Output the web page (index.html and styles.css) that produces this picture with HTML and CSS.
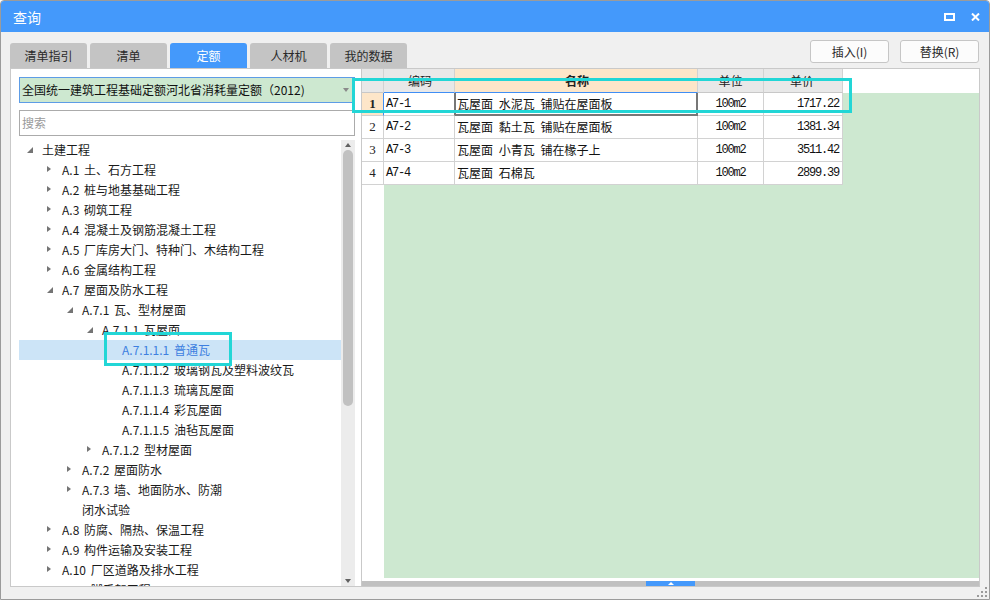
FILE: index.html
```html
<!DOCTYPE html>
<html lang="zh-CN">
<head>
<meta charset="utf-8">
<title>查询</title>
<link rel="stylesheet" href="styles.css">
</head>
<body>
<div class="window">
  <header class="titlebar">
    <span class="title">查询</span>
    <div class="win-controls">
      <svg class="icon" width="11" height="8" viewBox="0 0 11 8"><rect x="1" y="1" width="9" height="6" fill="none" stroke="#fff" stroke-width="2"/></svg>
      <svg class="icon" width="9" height="8" viewBox="0 0 9 8"><path d="M1 0.5L8 7.5M8 0.5L1 7.5" stroke="#fff" stroke-width="2"/></svg>
    </div>
  </header>

  <div class="toolbar">
    <nav class="tabs">
      <div class="tab">清单指引</div>
      <div class="tab">清单</div>
      <div class="tab active">定额</div>
      <div class="tab">人材机</div>
      <div class="tab">我的数据</div>
    </nav>
    <div class="actions">
      <button class="btn">插入(I)</button>
      <button class="btn">替换(R)</button>
    </div>
  </div>

  <div class="panes">
    <section class="left-pane">
      <div class="combo">
        <span class="combo-text">全国统一建筑工程基础定额河北省消耗量定额（2012)</span>
        <span class="combo-arrow"></span>
      </div>
      <div class="search">搜索</div>
      <div class="tree-area">
        <ul class="tree">
          <li class="node l0"><span class="caret e"></span><span class="label">土建工程</span></li>
          <li class="node l1"><span class="caret c"></span><span class="label">A.1 土、石方工程</span></li>
          <li class="node l1"><span class="caret c"></span><span class="label">A.2 桩与地基基础工程</span></li>
          <li class="node l1"><span class="caret c"></span><span class="label">A.3 砌筑工程</span></li>
          <li class="node l1"><span class="caret c"></span><span class="label">A.4 混凝土及钢筋混凝土工程</span></li>
          <li class="node l1"><span class="caret c"></span><span class="label">A.5 厂库房大门、特种门、木结构工程</span></li>
          <li class="node l1"><span class="caret c"></span><span class="label">A.6 金属结构工程</span></li>
          <li class="node l1"><span class="caret e"></span><span class="label">A.7 屋面及防水工程</span></li>
          <li class="node l2"><span class="caret e"></span><span class="label">A.7.1 瓦、型材屋面</span></li>
          <li class="node l3"><span class="caret e"></span><span class="label">A.7.1.1 瓦屋面</span></li>
          <li class="node l4 selected"><span class="caret"></span><span class="label">A.7.1.1.1 普通瓦</span></li>
          <li class="node l4"><span class="caret"></span><span class="label">A.7.1.1.2 玻璃钢瓦及塑料波纹瓦</span></li>
          <li class="node l4"><span class="caret"></span><span class="label">A.7.1.1.3 琉璃瓦屋面</span></li>
          <li class="node l4"><span class="caret"></span><span class="label">A.7.1.1.4 彩瓦屋面</span></li>
          <li class="node l4"><span class="caret"></span><span class="label">A.7.1.1.5 油毡瓦屋面</span></li>
          <li class="node l3"><span class="caret c"></span><span class="label">A.7.1.2 型材屋面</span></li>
          <li class="node l2"><span class="caret c"></span><span class="label">A.7.2 屋面防水</span></li>
          <li class="node l2"><span class="caret c"></span><span class="label wrap">A.7.3 墙、地面防水、防潮闭水试验</span></li>
          <li class="node l1"><span class="caret c"></span><span class="label">A.8 防腐、隔热、保温工程</span></li>
          <li class="node l1"><span class="caret c"></span><span class="label">A.9 构件运输及安装工程</span></li>
          <li class="node l1"><span class="caret c"></span><span class="label">A.10 厂区道路及排水工程</span></li>
          <li class="node l1"><span class="caret c"></span><span class="label">A.11 脚手架工程</span></li>
        </ul>
        <div class="vscroll">
          <div class="sc-btn"><span class="arr-up"></span></div>
          <div class="sc-thumb"></div>
          <div class="sc-fill"></div>
          <div class="sc-btn"><span class="arr-down"></span></div>
        </div>
      </div>
    </section>

    <section class="right-pane">
      <div class="grid-head">
        <div class="cell c-num"></div>
        <div class="cell c-code cur-top">编码</div>
        <div class="cell c-name sel cur-top">名称</div>
        <div class="cell c-unit">单位</div>
        <div class="cell c-price">单价</div>
      </div>
      <div class="grid-body">
        <div class="row current">
          <div class="cell c-num">1</div>
          <div class="cell c-code mono">A7-1</div>
          <div class="cell c-name">瓦屋面 水泥瓦 铺贴在屋面板</div>
          <div class="cell c-unit mono">100m2</div>
          <div class="cell c-price mono">1717.22</div>
        </div>
        <div class="row">
          <div class="cell c-num">2</div>
          <div class="cell c-code mono">A7-2</div>
          <div class="cell c-name">瓦屋面 黏土瓦 铺贴在屋面板</div>
          <div class="cell c-unit mono">100m2</div>
          <div class="cell c-price mono">1381.34</div>
        </div>
        <div class="row">
          <div class="cell c-num">3</div>
          <div class="cell c-code mono">A7-3</div>
          <div class="cell c-name">瓦屋面 小青瓦 铺在椽子上</div>
          <div class="cell c-unit mono">100m2</div>
          <div class="cell c-price mono">3511.42</div>
        </div>
        <div class="row">
          <div class="cell c-num">4</div>
          <div class="cell c-code mono">A7-4</div>
          <div class="cell c-name">瓦屋面 石棉瓦</div>
          <div class="cell c-unit mono">100m2</div>
          <div class="cell c-price mono">2899.39</div>
        </div>
      </div>
      <div class="hscroll"><div class="h-thumb"><span class="arr-up white"></span></div></div>
    </section>
  </div>

  <div class="hl hl-row"></div>
  <div class="hl hl-tree"></div>
  <svg class="grip" width="12" height="12" viewBox="0 0 12 12">
    <rect x="9" y="1" width="2" height="2" fill="#9a9a9a"/>
    <rect x="5" y="5" width="2" height="2" fill="#9a9a9a"/>
    <rect x="9" y="5" width="2" height="2" fill="#9a9a9a"/>
    <rect x="1" y="9" width="2" height="2" fill="#9a9a9a"/>
    <rect x="5" y="9" width="2" height="2" fill="#9a9a9a"/>
    <rect x="9" y="9" width="2" height="2" fill="#9a9a9a"/>
  </svg>
</div>
</body>
</html>
```

FILE: styles.css
```css
* { box-sizing: border-box; }
html, body { margin: 0; padding: 0; }
body {
  width: 990px;
  height: 600px;
  overflow: hidden;
  background: #fff;
  font-family: "Noto Sans CJK SC", "Noto Sans", sans-serif;
  font-size: 12px;
  color: #222;
}

.window {
  position: relative;
  width: 990px;
  height: 600px;
  border: 1px solid #9b9b9b;
  border-radius: 4px 4px 0 0;
  background: #f0f0f0;
  display: flex;
  flex-direction: column;
  overflow: hidden;
}

/* title bar */
.titlebar {
  flex: none;
  height: 31px;
  background: #4499fb;
  display: flex;
  align-items: center;
  justify-content: space-between;
  padding: 0 9px 0 12px;
}
.title { color: #fff; font-size: 14px; line-height: 20px; }
.win-controls { display: flex; align-items: center; gap: 16px; }
.icon { display: block; }

/* toolbar */
.toolbar {
  flex: none;
  height: 36px;
  display: flex;
  justify-content: space-between;
  align-items: flex-start;
  padding: 0 10px 0 9px;
}
.tabs { display: flex; gap: 3px; margin-top: 11px; }
.tab {
  width: 77px;
  height: 25px;
  line-height: 25px;
  text-align: center;
  background: #c4c4c4;
  color: #2a2a2a;
  border-radius: 3px 3px 0 0;
}
.tab.active { background: #4499fb; color: #fff; }
.actions { display: flex; gap: 11px; margin-top: 8px; }
.btn {
  width: 79px;
  height: 23px;
  padding: 0;
  border: 1px solid #c6c6c6;
  border-radius: 3px;
  background: #fcfcfc;
  color: #2a2a2a;
  font-family: "Noto Sans CJK SC", "Noto Sans", sans-serif;
  font-size: 12px;
  line-height: 21px;
}

/* panes */
.panes {
  flex: none;
  height: 519px;
  display: flex;
  padding: 0 9px;
}
.left-pane {
  width: 351px;
  height: 519px;
  background: #fff;
  border: 1px solid #c9c9c9;
  border-right: none;
  display: flex;
  flex-direction: column;
}
.combo {
  margin: 8px 0 0 8px;
  width: 336px;
  height: 26px;
  border: 1px solid #5d9ce6;
  background: #cde8d0;
  display: flex;
  align-items: center;
  justify-content: space-between;
  padding: 0 5px 0 2px;
  color: #111;
  line-height: 20px;
}
.combo-arrow {
  width: 0; height: 0;
  border-top: 4px solid #8a8a8a;
  border-left: 3px solid transparent;
  border-right: 3px solid transparent;
}
.search {
  margin: 7px 0 0 8px;
  width: 336px;
  height: 26px;
  border: 1px solid #ababab;
  color: #9a9a9a;
  padding-left: 2px;
  line-height: 24px;
}
.tree-area {
  margin: 4px 0 0 8px;
  width: 336px;
  flex: 1;
  min-height: 0;
  display: flex;
}
.tree {
  flex: 1;
  margin: 0;
  padding: 0;
  list-style: none;
  overflow: hidden;
}
.node {
  display: flex;
  align-items: flex-start;
  line-height: 20px;
  color: #1a1a1a;
  white-space: nowrap;
}
.label { word-spacing: 2px; }
.node.l0 { padding-left: 4px; }
.node.l1 { padding-left: 24px; }
.node.l2 { padding-left: 44px; }
.node.l3 { padding-left: 64px; }
.node.l4 { padding-left: 84px; }
.node.selected { background: #cce4f7; }
.node.selected .label { color: #3d7fe0; }
.label.wrap { white-space: normal; width: 148px; }
.caret {
  flex: none;
  width: 12px;
  height: 20px;
  margin-right: 7px;
  position: relative;
}
.caret.c::before {
  content: "";
  position: absolute;
  left: 4px;
  top: 6px;
  border-left: 4px solid #747474;
  border-top: 3.5px solid transparent;
  border-bottom: 3.5px solid transparent;
}
.caret.e::before {
  content: "";
  position: absolute;
  left: 4px;
  top: 7px;
  border-right: 6px solid #747474;
  border-top: 6px solid transparent;
}

/* vertical scrollbar */
.vscroll {
  flex: none;
  width: 14px;
  background: #ececec;
  display: flex;
  flex-direction: column;
  align-items: center;
}
.sc-btn { height: 10px; width: 14px; display: flex; align-items: center; justify-content: center; }
.sc-thumb {
  width: 10px;
  height: 256px;
  border-radius: 5px;
  background: #c1c1c1;
}
.sc-fill { flex: 1; }
.arr-up {
  width: 0; height: 0;
  border-bottom: 4px solid #606060;
  border-left: 3.5px solid transparent;
  border-right: 3.5px solid transparent;
}
.arr-down {
  width: 0; height: 0;
  border-top: 4px solid #606060;
  border-left: 3.5px solid transparent;
  border-right: 3.5px solid transparent;
}
.arr-up.white { border-bottom: 3px solid #fff; border-left-width: 3px; border-right-width: 3px; }

/* grid pane */
.right-pane {
  width: 619px;
  height: 519px;
  background: #fff;
  border: 1px solid #c9c9c9;
  display: flex;
  flex-direction: column;
}
.grid-head {
  flex: none;
  height: 24px;
  display: flex;
}
.grid-head .cell {
  background: #e8e8e8;
  border-bottom: 1px solid #c8c8c8;
  justify-content: center;
  color: #222;
}
.grid-head .cell.sel { background: #fde6c9; font-weight: bold; }
.grid-head .cell.cur-top { border-bottom-color: #3f8ef5; }
.cell {
  display: flex;
  align-items: center;
  border-right: 1px solid #d2d2d2;
  line-height: 20px;
  white-space: nowrap;
  overflow: hidden;
}
.c-num { width: 22px; justify-content: center; font-family: "Liberation Serif", serif; font-size: 13px; }
.c-code { width: 71px; padding-left: 2px; }
.c-name { width: 243px; padding-left: 2px; word-spacing: 3px; color: #111; }
.c-unit { width: 66px; justify-content: center; }
.c-price { width: 79px; justify-content: flex-end; padding-right: 2px; }
.mono {
  font-family: "Liberation Mono", monospace;
  font-size: 12px;
  letter-spacing: -1.2px;
  color: #111;
}
.c-price.mono { padding-right: 3px; }
.grid-body {
  flex: 1;
  min-height: 0;
  background: linear-gradient(to right, #fff 22px, #cde8d0 22px);
}
.row { display: flex; height: 23px; }
.row .cell { background: #fff; border-bottom: 1px solid #d2d2d2; }
.row.current .c-num { background: #fde6c9; font-weight: bold; border-right-color: #3f8ef5; }
.row.current .c-code { border-right-color: #777; }
.row.current .c-name {
  border-left: 1px solid #777;
  border-right: 2px solid #777;
  border-bottom: 2px solid #777;
  padding-left: 1px;
}
.hscroll {
  flex: none;
  height: 5px;
  margin-top: 3px;
  background: #c0c0c0;
  display: flex;
}
.h-thumb {
  margin-left: 284px;
  width: 49px;
  height: 5px;
  background: #4499fb;
  display: flex;
  justify-content: center;
  align-items: center;
}

/* overlays */
.hl {
  position: absolute;
  border: 3px solid #22d6d6;
}
.hl-row { left: 351px; top: 77px; width: 500px; height: 35px; }
.hl-tree { left: 103px; top: 331px; width: 128px; height: 34px; }
.grip { position: absolute; right: 1px; bottom: 1px; }
```
